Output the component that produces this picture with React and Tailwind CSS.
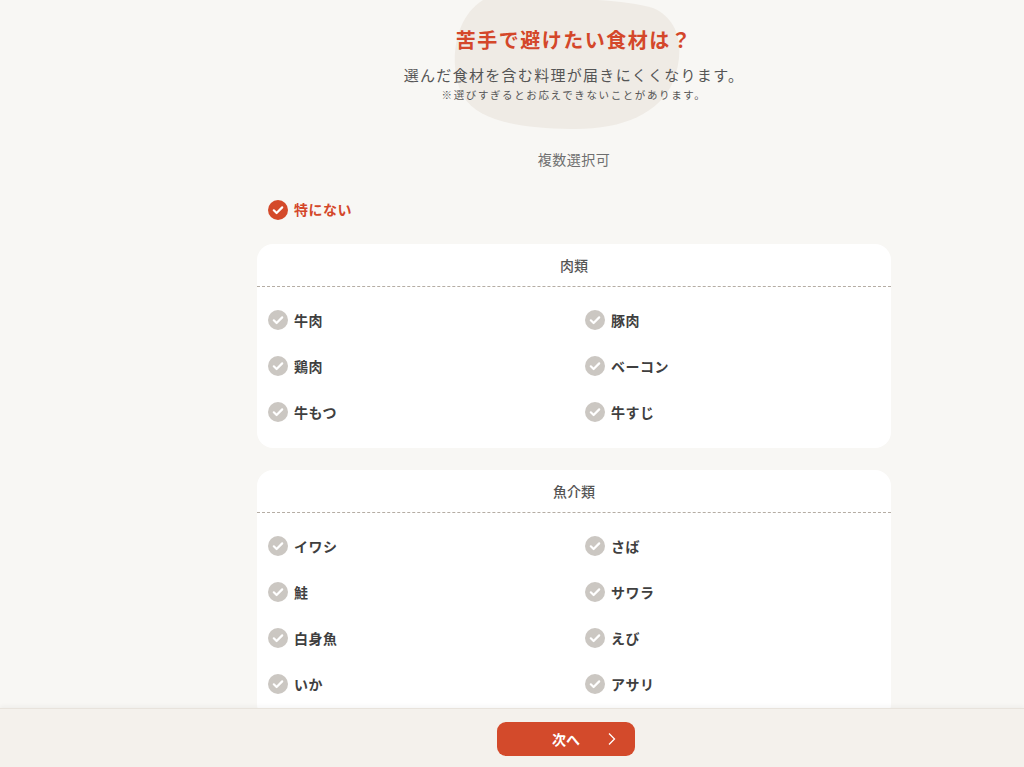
const font = { fontFamily: '"Noto Sans CJK JP", "Noto Sans", sans-serif' };

const groups = [
  { name: "肉類", items: ["牛肉", "豚肉", "鶏肉", "ベーコン", "牛もつ", "牛すじ"] },
  { name: "魚介類", items: ["イワシ", "さば", "鮭", "サワラ", "白身魚", "えび", "いか", "アサリ"] },
];

function Check({ active }) {
  return (
    <svg width="20" height="20" viewBox="0 0 20 20" className="shrink-0">
      <circle cx="10" cy="10" r="10" fill={active ? "#d44a2a" : "#cbc7c2"} />
      <path d="M5.8 10.3l2.8 2.7 5.6-5.6" fill="none" stroke="#fff" strokeWidth="2.2" strokeLinecap="round" strokeLinejoin="round" />
    </svg>
  );
}

function Group({ name, items }) {
  return (
    <div className="rounded-[16px] bg-white">
      <div className="flex h-[43px] items-center justify-center border-b border-dashed border-[#b5ada4] text-[14px] font-medium text-[#555]">
        {name}
      </div>
      <div className="grid grid-cols-[317px_1fr] px-[11px] pt-[10px] pb-[13px]">
        {items.map((item) => (
          <div key={item} className="flex h-[46px] items-center gap-[6px]">
            <Check />
            <span className="text-[14px] font-bold tracking-[0.5px] text-[#3f3f3f]">{item}</span>
          </div>
        ))}
      </div>
    </div>
  );
}

export default function App() {
  return (
    <div className="min-h-screen bg-[#f8f7f4] pb-[80px]" style={font}>
      <div className="ml-[257px] w-[634px]">
        <div className="relative flex flex-col items-center pt-[25px]">
          <svg className="absolute left-[196px] top-0" width="230" height="132" viewBox="0 0 230 132">
            <path
              d="M30 0 C70 -2 160 -4 200 8 C228 20 232 52 220 82 C206 114 168 130 118 129 C68 128 26 122 10 96 C-4 70 -2 20 30 0 Z"
              fill="#efebe5"
            />
          </svg>
          <h1 className="relative text-[20px] font-bold tracking-[1.5px] text-[#d4472a]">苦手で避けたい食材は？</h1>
          <p className="relative mt-[9px] text-[15px] tracking-[1.3px] text-[#555]">選んだ食材を含む料理が届きにくくなります。</p>
          <p className="relative mt-[0px] text-[10.5px] tracking-[1.6px] text-[#555]">※選びすぎるとお応えできないことがあります。</p>
        </div>
        <p className="mt-[47px] text-center text-[14px] tracking-[0.5px] text-[#6f6f6f]">複数選択可</p>
        <div className="mt-[29px] flex items-center gap-[6px] pl-[11px]">
          <Check active />
          <span className="text-[14px] font-bold tracking-[0.5px] text-[#d4472a]">特にない</span>
        </div>
        <div className="mt-[24px] flex flex-col gap-[22px]">
          {groups.map((g) => (
            <Group key={g.name} {...g} />
          ))}
        </div>
      </div>
      <div className="fixed bottom-0 left-0 right-0 h-[59px] border-t border-[#e8e3dc] bg-[#f4f1ec] shadow-[0_-2px_4px_rgba(0,0,0,0.04)]">
        <button className="ml-[497px] mt-[13px] flex h-[34px] w-[138px] items-center rounded-[9px] bg-[#d34a2b] text-white">
          <span className="flex-1 pl-[28px] text-center text-[14px] font-bold">次へ</span>
          <svg width="10" height="14" viewBox="0 0 10 14" className="mr-[18px]">
            <path d="M2 1.5l5.5 5.5L2 12.5" fill="none" stroke="#fff" strokeWidth="1.3" />
          </svg>
        </button>
      </div>
    </div>
  );
}
